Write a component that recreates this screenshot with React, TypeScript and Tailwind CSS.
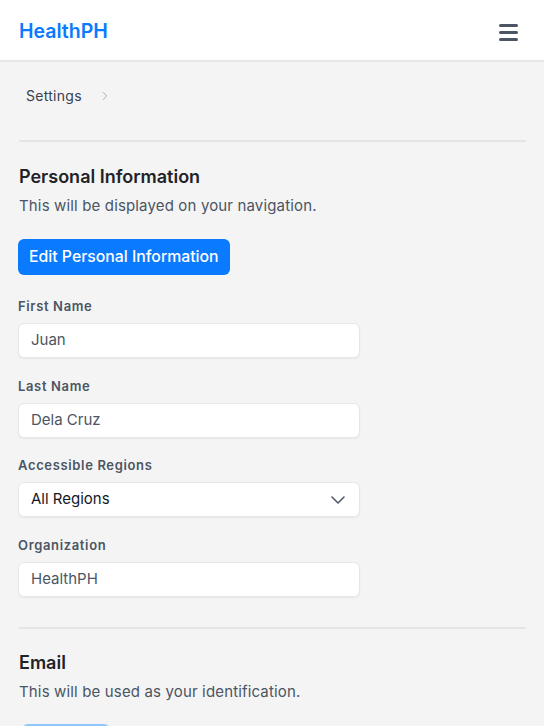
import { ChevronRight } from "lucide-react";

function Field({ label, value, select, gap }: { label: string; value: string; select?: boolean; gap: string }) {
  return (
    <div className={gap}>
      <div className="h-5 text-[13px] font-semibold leading-5 tracking-[0.05em] text-[#4b5563]">{label}</div>
      <div className="mt-[7px] flex h-[35px] w-[342px] items-center justify-between rounded-md border border-[#e5e7eb] bg-white px-3 shadow-[0_1px_2px_rgba(0,0,0,0.06)]">
        <span className={select ? "text-[15px] text-[#111827]" : "text-[15px] text-[#4b5563]"}>{value}</span>
        {select && (
          <svg width="14" height="8" viewBox="0 0 14 8" fill="none" className="mr-[2px]">
            <path d="M1 1l6 6 6-6" stroke="#4b5563" strokeWidth="1.5" strokeLinecap="round" strokeLinejoin="round" />
          </svg>
        )}
      </div>
    </div>
  );
}

export default function App() {
  return (
    <div className="min-h-[726px] bg-[#f4f4f4] font-['Inter',sans-serif]">
      <header className="flex h-[62px] items-center justify-between border-b-2 border-[#e6e6e6] bg-white px-[19px] pt-1">
        <span className="text-[19.5px] font-semibold text-[#0a7aff]">HealthPH</span>
        <button aria-label="Menu" className="flex flex-col gap-[4px] pr-[7px]">
          <span className="block h-[3px] w-[19px] rounded-sm bg-[#4b5563]" />
          <span className="block h-[3px] w-[19px] rounded-sm bg-[#4b5563]" />
          <span className="block h-[3px] w-[19px] rounded-sm bg-[#4b5563]" />
        </button>
      </header>

      <main className="px-[18px]">
        <nav className="flex items-center gap-4 px-2 pt-6">
          <span className="text-[14px] leading-5 tracking-[0.02em] text-[#374151]">Settings</span>
          <ChevronRight className="h-3.5 w-3.5 text-[#9ca3af]" strokeWidth={1.5} />
        </nav>

        <div className="ml-px mt-[34px] border-t-2 border-[#e5e5e5]" />

        <section className="ml-px">
          <h2 className="mt-[21px] text-[18px] font-semibold leading-7 text-[#1f2328]">Personal Information</h2>
          <p className="mt-[4px] text-[15px] leading-[22px] tracking-[0.01em] text-[#4b5563]">This will be displayed on your navigation.</p>
        </section>

        <button className="mt-[22px] h-9 rounded-md bg-[#0a7aff] px-[11px] text-[15.8px] font-medium text-white">
          Edit Personal Information
        </button>

        <div>
          <Field gap="mt-[21px]" label="First Name" value="Juan" />
          <Field gap="mt-[18px]" label="Last Name" value="Dela Cruz" />
          <Field gap="mt-[17px]" label="Accessible Regions" value="All Regions" select />
          <Field gap="mt-[18px]" label="Organization" value="HealthPH" />
        </div>

        <div className="ml-px mt-[30px] border-t-2 border-[#e5e5e5]" />

        <section className="ml-px">
          <h2 className="mt-[20px] text-[18px] font-semibold leading-7 text-[#1f2328]">Email</h2>
          <p className="mt-[4px] text-[15px] leading-[22px] tracking-[0.01em] text-[#4b5563]">This will be used as your identification.</p>
        </section>

        <button className="ml-1 mt-[21px] h-9 w-[88px] rounded-md bg-[#93c5fd] text-[15px] font-medium text-white">
          Edit Email
        </button>
      </main>
    </div>
  );
}
